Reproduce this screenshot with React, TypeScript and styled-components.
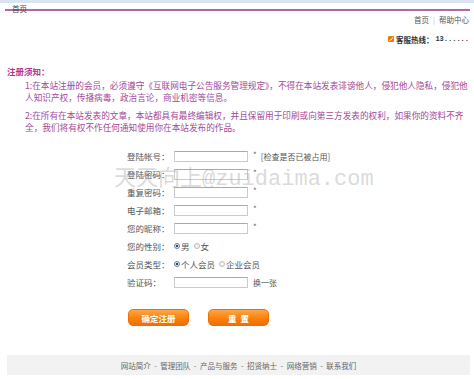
import styled, { createGlobalStyle } from "styled-components";

const GlobalStyle = createGlobalStyle`
  html, body {
    margin: 0;
    padding: 0;
    background: #ffffff;
  }
  body {
    font-family: "Noto Sans CJK SC", "Noto Sans", sans-serif;
  }
`;

const Page = styled.div`
  position: relative;
  width: 474px;
  height: 379px;
  overflow: hidden;
  background: #fff;
`;

const TopStripe = styled.div`
  height: 3px;
  background: #dbe5f2;
`;

const Crumb = styled.div`
  height: 6px;
  margin: 0 4px 0 5px;
  padding-left: 7px;
  border-bottom: 2px solid #b5679f;
  font-size: 7.5px;
  line-height: 12px;
  color: #444;
`;

const TopLinks = styled.div`
  margin-top: 3px;
  padding-right: 5px;
  text-align: right;
  font-size: 7.5px;
  line-height: 12px;
  color: #555;
`;

const Pipe = styled.span`
  color: #bbb;
  padding: 0 4px;
`;

const Hotline = styled.div`
  margin-top: 7px;
  padding-right: 5px;
  display: flex;
  justify-content: flex-end;
  align-items: center;
  gap: 2px;
  height: 12px;
  font-size: 7.5px;
  font-weight: 700;
  color: #333;
`;

const Number = styled.span`
  font-family: "Liberation Mono", monospace;
  font-size: 7px;
`;

const Notice = styled.div`
  margin-top: 20px;
  padding-left: 7px;
`;

const NoticeTitle = styled.div`
  font-size: 8.5px;
  line-height: 12px;
  font-weight: 700;
  color: #b3358c;
`;

const NoticeText = styled.p`
  margin: 2px 0 0;
  padding-left: 18px;
  width: 444px;
  font-size: 8.65px;
  line-height: 12px;
  color: #a24a9a;

  & + & {
    margin-top: 6px;
  }
`;

const Form = styled.div`
  margin-top: 14px;
  padding-left: 127px;
  display: flex;
  flex-direction: column;
`;

const Row = styled.div`
  display: flex;
  align-items: center;
  height: 18px;
  font-size: 8.5px;
  color: #555;
`;

const Label = styled.span`
  width: 47px;
  flex-shrink: 0;
`;

const Field = styled.input`
  box-sizing: border-box;
  width: 74px;
  height: 11px;
  margin: 0 5px 0 0;
  padding: 0;
  border: 1px solid #cbcbcb;
  border-top-color: #aaaaaa;
  background: #fff;
  outline: none;
`;

const Hint = styled.span`
  color: #555;
  font-size: 8px;
`;

const Star = styled.span`
  color: #666;
  font-size: 8px;
  margin-right: 4px;
  align-self: flex-start;
  margin-top: 2px;
`;

const Option = styled.span`
  display: inline-flex;
  align-items: center;
  gap: 1px;
  margin-right: 4px;
`;

const Dot = styled.span<{ $on?: boolean }>`
  box-sizing: border-box;
  width: 6px;
  height: 6px;
  border-radius: 50%;
  border: 1px solid ${(p) => (p.$on ? "#6d7f99" : "#bcbcbc")};
  background: ${(p) =>
    p.$on ? "radial-gradient(circle, #2d4a70 0 45%, #dfe6ef 55%)" : "#f4f4f4"};
`;

const Buttons = styled.div`
  margin-top: 18px;
  padding-left: 128px;
  display: flex;
  gap: 19px;
`;

const OrangeButton = styled.button`
  width: 61px;
  height: 17px;
  padding: 0;
  border: 1px solid #ec7000;
  border-radius: 5px;
  background: linear-gradient(#ffa648, #fb8410 50%, #f26e00);
  color: #fff;
  font-family: "Noto Sans CJK SC", sans-serif;
  font-size: 8.5px;
  font-weight: 700;
  cursor: pointer;
`;

const Footer = styled.div`
  margin: 29px 4px 0 7px;
  height: 20px;
  background: #f2f2f2;
  display: flex;
  justify-content: center;
  align-items: center;
  font-size: 7.5px;
  color: #666;
`;

const Sep = styled.span`
  padding: 0 3.5px;
`;

const Watermark = styled.div`
  position: absolute;
  left: 114px;
  top: 162px;
  pointer-events: none;
  color: rgba(160, 160, 160, 0.4);
  font-size: 22px;
  line-height: 26px;
  white-space: nowrap;
`;

const WatermarkMono = styled.span`
  font-family: "Liberation Mono", monospace;
`;

const PhoneIcon = () => (
  <svg width="6" height="6" viewBox="0 0 6 6">
    <rect width="6" height="6" rx="1" fill="#f07a12" />
    <path d="M1.3 4.7 L2.2 3.8 L2.8 4.1 L4.2 2.7 L3.9 2.1 L4.7 1.3" stroke="#fff" strokeWidth="0.9" fill="none" />
  </svg>
);

const footerLinks = ["网站简介", "管理团队", "产品与服务", "招贤纳士", "网络营销", "联系我们"];

export default function App() {
  return (
    <>
      <GlobalStyle />
      <Page>
        <TopStripe />
        <Crumb>首页</Crumb>
        <TopLinks>
          首页<Pipe>|</Pipe>帮助中心
        </TopLinks>
        <Hotline>
          <PhoneIcon />
          <span>客服热线：</span>
          <Number>13......</Number>
        </Hotline>

        <Notice>
          <NoticeTitle>注册须知：</NoticeTitle>
          <NoticeText>
            1:在本站注册的会员，必须遵守《互联网电子公告服务管理规定》，不得在本站发表诽谤他人，侵犯他人隐私，侵犯他人知识产权，传播病毒，政治言论，商业机密等信息。
          </NoticeText>
          <NoticeText>
            2:在所有在本站发表的文章，本站都具有最终编辑权，并且保留用于印刷或向第三方发表的权利，如果你的资料不齐全，我们将有权不作任何通知使用你在本站发布的作品。
          </NoticeText>
        </Notice>

        <Form>
          <Row>
            <Label>登陆帐号：</Label>
            <Field type="text" />
            <Star>*</Star>
            <Hint>[检查是否已被占用]</Hint>
          </Row>
          <Row>
            <Label>登陆密码：</Label>
            <Field type="password" />
            <Star>*</Star>
          </Row>
          <Row>
            <Label>重复密码：</Label>
            <Field type="password" />
            <Star>*</Star>
          </Row>
          <Row>
            <Label>电子邮箱：</Label>
            <Field type="text" />
            <Star>*</Star>
          </Row>
          <Row>
            <Label>您的昵称：</Label>
            <Field type="text" />
            <Star>*</Star>
          </Row>
          <Row>
            <Label>您的性别：</Label>
            <Option>
              <Dot $on />男
            </Option>
            <Option>
              <Dot />女
            </Option>
          </Row>
          <Row>
            <Label>会员类型：</Label>
            <Option>
              <Dot $on />个人会员
            </Option>
            <Option>
              <Dot />企业会员
            </Option>
          </Row>
          <Row>
            <Label>验证码：</Label>
            <Field type="text" />
            <Hint>换一张</Hint>
          </Row>
        </Form>

        <Buttons>
          <OrangeButton>确定注册</OrangeButton>
          <OrangeButton>重&nbsp;&nbsp;置</OrangeButton>
        </Buttons>

        <Footer>
          {footerLinks.map((item, i) => (
            <span key={item}>
              {i > 0 && <Sep>-</Sep>}
              {item}
            </span>
          ))}
        </Footer>

        <Watermark>
          天天向上<WatermarkMono>@zuidaima.com</WatermarkMono>
        </Watermark>
      </Page>
    </>
  );
}
